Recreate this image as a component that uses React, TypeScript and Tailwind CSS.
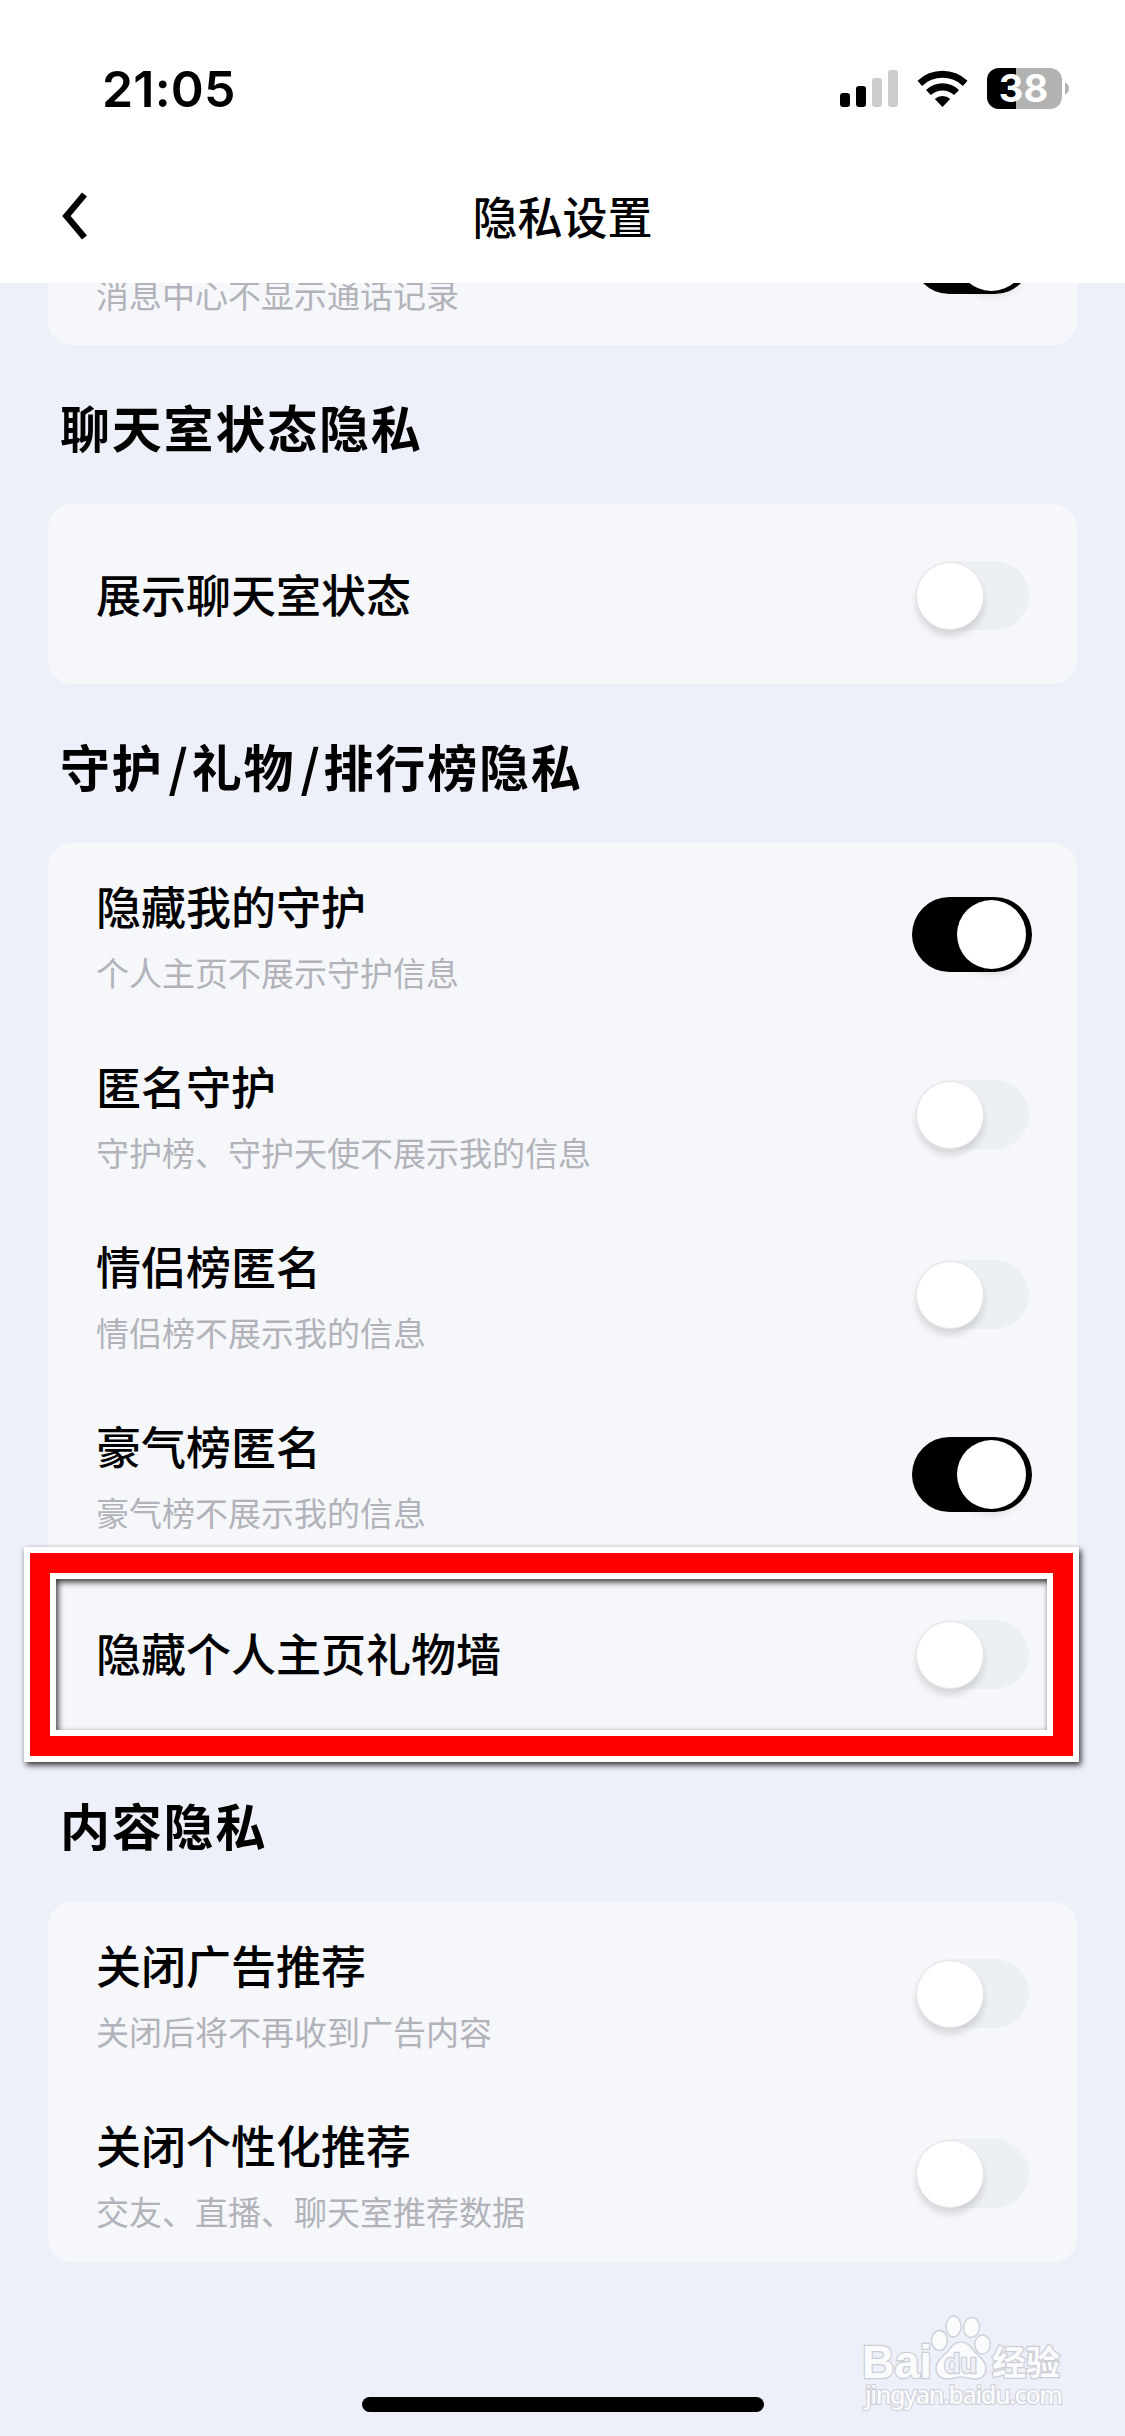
import React from 'react'

type Item = { title?: string; desc?: string; on?: boolean }
type Section = { heading?: string[]; headingClass?: string; items: Item[] }

const sections: Section[] = [
    {
        items: [{ desc: '消息中心不显示通话记录', on: true }],
    },
    {
        heading: ['聊天室状态隐私'],
        headingClass: 'h-[159px]',
        items: [{ title: '展示聊天室状态' }],
    },
    {
        heading: ['守护', '礼物', '排行榜隐私'],
        headingClass: 'h-[159px]',
        items: [
            { title: '隐藏我的守护', desc: '个人主页不展示守护信息', on: true },
            { title: '匿名守护', desc: '守护榜、守护天使不展示我的信息' },
            { title: '情侣榜匿名', desc: '情侣榜不展示我的信息' },
            { title: '豪气榜匿名', desc: '豪气榜不展示我的信息', on: true },
            { title: '隐藏个人主页礼物墙' },
        ],
    },
    {
        heading: ['内容隐私'],
        headingClass: 'h-[159px]',
        items: [
            { title: '关闭广告推荐', desc: '关闭后将不再收到广告内容' },
            { title: '关闭个性化推荐', desc: '交友、直播、聊天室推荐数据' },
        ],
    },
]

function Toggle({ on }: { on?: boolean }) {
    if (on) {
        return (
            <div className="mt-[3px] flex h-[75px] w-[120px] items-center justify-end rounded-full bg-black pr-[6px]">
                <div className="size-[69px] rounded-full bg-white shadow-[0_5px_8px_rgba(0,0,0,0.12)]" />
            </div>
        )
    }
    return (
        <div className="mt-[3px] mr-[3px] flex h-[69px] w-[113px] items-center rounded-full bg-[#eceff4]">
            <div className="size-[68px] rounded-full border border-[#e6e6e7] bg-white shadow-[0_6px_7px_rgba(0,0,0,0.13)]" />
        </div>
    )
}

function Row({ item }: { item: Item }) {
    return (
        <div className="flex h-[180px] items-center justify-between pr-[45px] pl-[48px]">
            <div className={item.desc ? 'pt-[3px]' : 'pb-px'}>
                <p className="min-h-[64px] text-[45px] leading-[64px] font-medium text-black">{item.title}</p>
                {item.desc && <p className="mt-[10px] text-[33px] leading-[48px] text-[#b2b3ba]">{item.desc}</p>}
            </div>
            <Toggle on={item.on} />
        </div>
    )
}

function Heading({ parts, className }: { parts: string[]; className?: string }) {
    return (
        <h2 className={`flex items-center pt-[4px] pl-[12px] text-[50px] font-semibold tracking-[1.8px] text-black ${className}`}>
            {parts.map((part, i) => (
                <React.Fragment key={part}>
                    {i > 0 && <span className="pr-[2px] pl-[5px]">/</span>}
                    <span>{part}</span>
                </React.Fragment>
            ))}
        </h2>
    )
}

function StatusBar() {
    return (
        <div className="flex h-[150px] items-start justify-between pt-[58px] pr-[55px] pl-[102px]">
            <p className="font-[Inter,sans-serif] text-[50px] leading-[62px] font-semibold tracking-[0.2px] text-black">21:05</p>
            <svg width="230" height="42" viewBox="0 0 230 42" className="mt-[9px] overflow-visible">
                {/* signal */}
                <rect x="0" y="26" width="10" height="14" rx="3" />
                <rect x="16" y="19" width="10" height="21" rx="3" />
                <rect x="32" y="11" width="10" height="29" rx="3" fill="#ccc" />
                <rect x="48" y="3" width="10" height="37" rx="3" fill="#ccc" />
                {/* wifi */}
                <path d="M77.500 13.800a36 36 0 0 1 50 0l-4.600 5.100a29.600 29.600 0 0 0-40.800 0z" />
                <path d="M86 22.900a24 24 0 0 1 33 0l-4.800 5.200a17 17 0 0 0-23.400 0z" />
                <path d="M94.800 32a11.400 11.400 0 0 1 15.400 0l-7.700 8z" />
                {/* battery */}
                <clipPath id="battery">
                    <rect x="147" y="1" width="75" height="41" rx="12" />
                </clipPath>
                <g clipPath="url(#battery)">
                    <rect x="147" y="1" width="75" height="41" fill="#b2b2b2" />
                    <rect x="147" y="1" width="29" height="41" />
                </g>
                <path d="M225 15.500c2.600 1 4 3.200 4 6s-1.400 5-4 6z" fill="#b2b2b2" />
                <text x="183.500" y="35" textAnchor="middle" fontFamily="Inter, sans-serif" fontSize="38" fontWeight="700" fill="#fff">38</text>
            </svg>
        </div>
    )
}

function Watermark() {
    return (
        <svg width="215" height="110" viewBox="860 2310 215 110" className="absolute top-[2310px] left-[860px]">
            <g fill="#fafbfd" stroke="#d0d2da" strokeWidth="1.500">
                <ellipse cx="939.500" cy="2340.500" rx="8" ry="10" />
                <ellipse cx="953.500" cy="2326.500" rx="7.500" ry="10.500" />
                <ellipse cx="971.500" cy="2327.500" rx="8" ry="10" transform="rotate(8 971.500 2327.500)" />
                <ellipse cx="982.500" cy="2344.500" rx="7.800" ry="9.500" />
                <path d="M961 2342c-7 0-10 5-13 9-4 5-12 9-12 17 0 7 5 11 11 11 5 0 9-2 14-2s9 2 14 2c7 0 11-4 11-11 0-8-8-12-12-17-3-4-6-9-13-9z" />
            </g>
            <g fill="#fafbfd" stroke="#cccdd5" strokeWidth="2.500" paintOrder="stroke" fontFamily="'Liberation Sans', sans-serif">
                <text x="862" y="2378" fontSize="46" fontWeight="700" textLength="70" lengthAdjust="spacingAndGlyphs">Bai</text>
                <text x="944" y="2373" fontSize="28" fontWeight="700" fill="#edf0f9" textLength="33" lengthAdjust="spacingAndGlyphs">du</text>
                <text x="992" y="2375" fontSize="34" fontWeight="700" fontFamily="'Noto Sans CJK SC', sans-serif">经验</text>
                <text x="865" y="2404" fontSize="25" strokeWidth="2" fontFamily="'Noto Sans', sans-serif" fontWeight="500" textLength="198">jingyan.baidu.com</text>
            </g>
        </svg>
    )
}

export default function App() {
    return (
        <div className="relative flex h-[2436px] w-[1125px] flex-col overflow-hidden bg-[#edf0f9] font-['Noto_Sans_CJK_SC',sans-serif]">
            <header className="h-[283px] shrink-0 bg-white">
                <StatusBar />
                <div className="flex h-[131px] items-center justify-between px-[62px]">
                    <svg width="26" height="48" viewBox="0 0 26 48" fill="none" stroke="#000" strokeWidth="6.500">
                        <path d="M22.500 2.500 4.500 24l18 21.500" />
                    </svg>
                    <h1 className="text-[45px] leading-[64px] font-medium text-black">隐私设置</h1>
                    <span className="w-[26px]" />
                </div>
            </header>
            <main className="min-h-0 flex-1 overflow-hidden px-[48px]">
                {/* the list is scrolled, its first row is partly under the header */}
                <div className="-mt-[118px]">
                    {sections.map((section, i) => (
                        <section key={i}>
                            {section.heading && <Heading parts={section.heading} className={section.headingClass} />}
                            <div className="rounded-[24px] bg-[#f5f7fb]">
                                {section.items.map((item, j) => (
                                    <Row key={j} item={item} />
                                ))}
                            </div>
                        </section>
                    ))}
                </div>
            </main>

            {/* highlighted row */}
            <div className="absolute top-[1547px] left-[24px] h-[215px] w-[1055px] border-[6px] border-white shadow-[2px_3px_6px_rgba(0,0,0,0.8)]">
                <div className="h-full border-[20px] border-[#ff0000]">
                    <div className="h-full border-[6px] border-white shadow-[inset_2px_3px_6px_rgba(0,0,0,0.8)]" />
                </div>
            </div>

            <Watermark />

            {/* home indicator */}
            <div className="absolute top-[2397px] left-[362px] h-[15px] w-[402px] rounded-full bg-black" />
        </div>
    )
}
